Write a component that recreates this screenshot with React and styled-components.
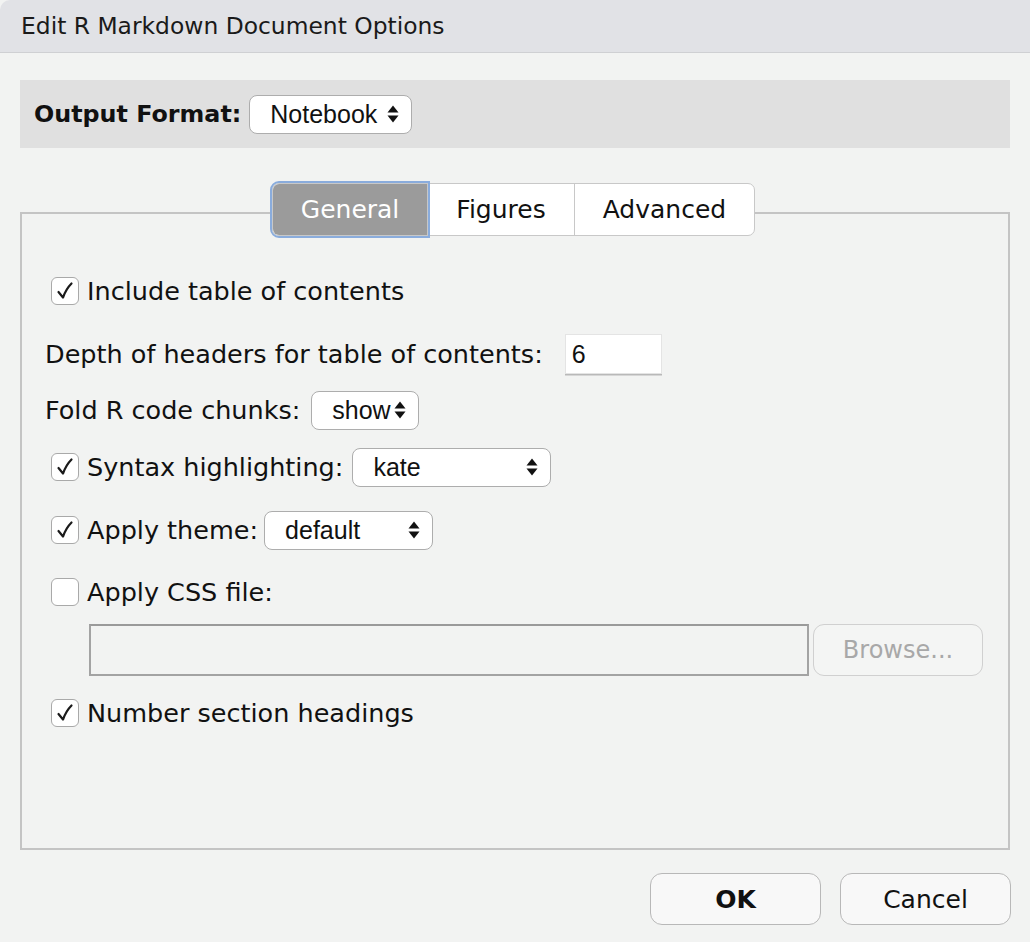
import React from "react";
import styled, { createGlobalStyle } from "styled-components";

const GlobalStyle = createGlobalStyle`
  html, body {
    margin: 0;
    padding: 0;
    background: #f2f3f2;
  }
  * {
    box-sizing: border-box;
  }
`;

const Window = styled.div`
  width: 1030px;
  height: 942px;
  display: flex;
  flex-direction: column;
  background: #f2f3f2;
  font-family: "DejaVu Sans", "Noto Sans", sans-serif;
  color: #111;
`;

const TitleBar = styled.div`
  height: 53px;
  display: flex;
  align-items: center;
  padding-left: 21px;
  background: #e1e2e6;
  border-bottom: 1px solid #cfd0d3;
  border-top-left-radius: 10px;
  font-size: 23.4px;
  color: #1a1a1a;
`;

const Content = styled.div`
  padding: 0 20px;
  display: flex;
  flex-direction: column;
`;

const FormatBar = styled.div`
  margin-top: 27px;
  height: 68px;
  display: flex;
  align-items: center;
  gap: 8px;
  padding-left: 14px;
  background: #e0e0e0;
`;

const FormatLabel = styled.span`
  font-weight: bold;
  font-size: 23.8px;
`;

const Select = styled.div`
  width: ${(p) => p.$w}px;
  height: 39px;
  display: flex;
  align-items: center;
  justify-content: space-between;
  padding: 0 12px 0 20px;
  background: #fff;
  border: 1.5px solid #adadad;
  border-radius: 8px;
  font-family: "Liberation Sans", Arial, sans-serif;
  font-size: 25px;
  color: #111;
`;

const TabRow = styled.div`
  margin-top: 33px;
  margin-bottom: -26px;
  display: flex;
  justify-content: center;
  padding-right: 3px;
  position: relative;
  z-index: 1;
`;

const TabGroup = styled.div`
  display: flex;
  margin: 2px 0;
  background: #fff;
  border: 1.5px solid #c8c8c8;
  border-radius: 7px;
`;

const Tab = styled.div`
  height: 51px;
  display: flex;
  align-items: center;
  padding: 0 28px;
  font-size: 25px;
  color: ${(p) => (p.$active ? "#fff" : "#111")};
  background: ${(p) => (p.$active ? "#9b9b9b" : "transparent")};
  border-left: ${(p) => (p.$first ? "none" : "1.5px solid #c8c8c8")};
  border-radius: ${(p) => (p.$first ? "6px 0 0 6px" : "0")};
  outline: ${(p) => (p.$active ? "2.5px solid #8aacdc" : "none")};
  outline-offset: 1px;
`;

const Panel = styled.div`
  height: 638px;
  border: 2px solid #c4c4c4;
  padding-top: 57px;
  display: flex;
  flex-direction: column;
`;

const Row = styled.div`
  height: ${(p) => p.$h || 40}px;
  margin-top: ${(p) => p.$mt || 0}px;
  display: flex;
  align-items: center;
  padding-left: ${(p) => p.$indent}px;
  gap: ${(p) => p.$gap || 0}px;
  font-size: 25.5px;
`;

const Label = styled.span`
  white-space: nowrap;
`;

const CheckLabel = styled.label`
  display: flex;
  align-items: center;
  gap: 8px;
  white-space: nowrap;
`;

const Check = styled.span`
  width: 28px;
  height: 28px;
  display: inline-flex;
  align-items: center;
  justify-content: center;
  background: #fff;
  border: 1.5px solid #a9a9a9;
  border-radius: 6px;
`;

const NumberInput = styled.div`
  width: 97px;
  height: 40px;
  display: flex;
  align-items: center;
  padding-left: 6px;
  background: #fff;
  border: 1px solid #e4e4e4;
  box-shadow: 0 1.5px 0 #b9b9b9;
  font-family: "Liberation Sans", Arial, sans-serif;
  font-size: 25px;
`;

const FileField = styled.div`
  width: 720px;
  height: 52px;
  background: #f2f3f2;
  border: 2px solid #a3a3a3;
  border-top-color: #9a9a9a;
`;

const BrowseButton = styled.div`
  width: 170px;
  height: 52px;
  display: flex;
  align-items: center;
  justify-content: center;
  background: #f4f5f4;
  border: 1.5px solid #d0d0d0;
  border-radius: 11px;
  font-size: 24px;
  color: #a8a8a8;
`;

const Footer = styled.div`
  margin-top: 23px;
  margin-right: -1px;
  display: flex;
  justify-content: flex-end;
  gap: 19px;
`;

const Button = styled.div`
  width: 171px;
  height: 52px;
  display: flex;
  align-items: center;
  justify-content: center;
  background: #f8f8f8;
  border: 1.5px solid #b8b8b8;
  border-radius: 12px;
  font-size: 25px;
  font-weight: ${(p) => (p.$primary ? "bold" : "normal")};
  color: #111;
`;

const Arrows = () => (
  <svg width="12" height="18" viewBox="0 0 12 18">
    <path d="M6 0.5 L11.5 7.5 L0.5 7.5 Z" fill="#111" />
    <path d="M6 17.5 L11.5 10.5 L0.5 10.5 Z" fill="#111" />
  </svg>
);

const CheckBox = ({ checked, children }) => (
  <CheckLabel>
    <Check>
      {checked && (
        <svg width="20" height="20" viewBox="0 0 20 20">
          <path
            d="M3.5 11 L8 16.5 C10 11 12.5 6.5 16.5 2.5"
            fill="none"
            stroke="#1a1a1a"
            strokeWidth="2.2"
            strokeLinecap="round"
            strokeLinejoin="round"
          />
        </svg>
      )}
    </Check>
    {children}
  </CheckLabel>
);

const Dropdown = ({ value, width }) => (
  <Select $w={width}>
    <span>{value}</span>
    <Arrows />
  </Select>
);

export default function App() {
  return (
    <>
      <GlobalStyle />
      <Window>
        <TitleBar>Edit R Markdown Document Options</TitleBar>
        <Content>
          <FormatBar>
            <FormatLabel>Output Format:</FormatLabel>
            <Dropdown value="Notebook" width={163} />
          </FormatBar>

          <TabRow>
            <TabGroup>
              <Tab $active $first>
                General
              </Tab>
              <Tab>Figures</Tab>
              <Tab>Advanced</Tab>
            </TabGroup>
          </TabRow>

          <Panel>
            <Row $indent={29}>
              <CheckBox checked>Include table of contents</CheckBox>
            </Row>
            <Row $indent={23} $mt={23} $gap={22}>
              <Label>Depth of headers for table of contents:</Label>
              <NumberInput>6</NumberInput>
            </Row>
            <Row $indent={23} $mt={16} $gap={11}>
              <Label>Fold R code chunks:</Label>
              <Dropdown value="show" width={108} />
            </Row>
            <Row $indent={29} $mt={17} $gap={9}>
              <CheckBox checked>Syntax highlighting:</CheckBox>
              <Dropdown value="kate" width={199} />
            </Row>
            <Row $indent={29} $mt={23} $gap={6}>
              <CheckBox checked>Apply theme:</CheckBox>
              <Dropdown value="default" width={169} />
            </Row>
            <Row $indent={29} $mt={22}>
              <CheckBox>Apply CSS file:</CheckBox>
            </Row>
            <Row $indent={67} $mt={11} $h={54} $gap={4}>
              <FileField />
              <BrowseButton>Browse...</BrowseButton>
            </Row>
            <Row $indent={29} $mt={16}>
              <CheckBox checked>Number section headings</CheckBox>
            </Row>
          </Panel>

          <Footer>
            <Button $primary>OK</Button>
            <Button>Cancel</Button>
          </Footer>
        </Content>
      </Window>
    </>
  );
}
